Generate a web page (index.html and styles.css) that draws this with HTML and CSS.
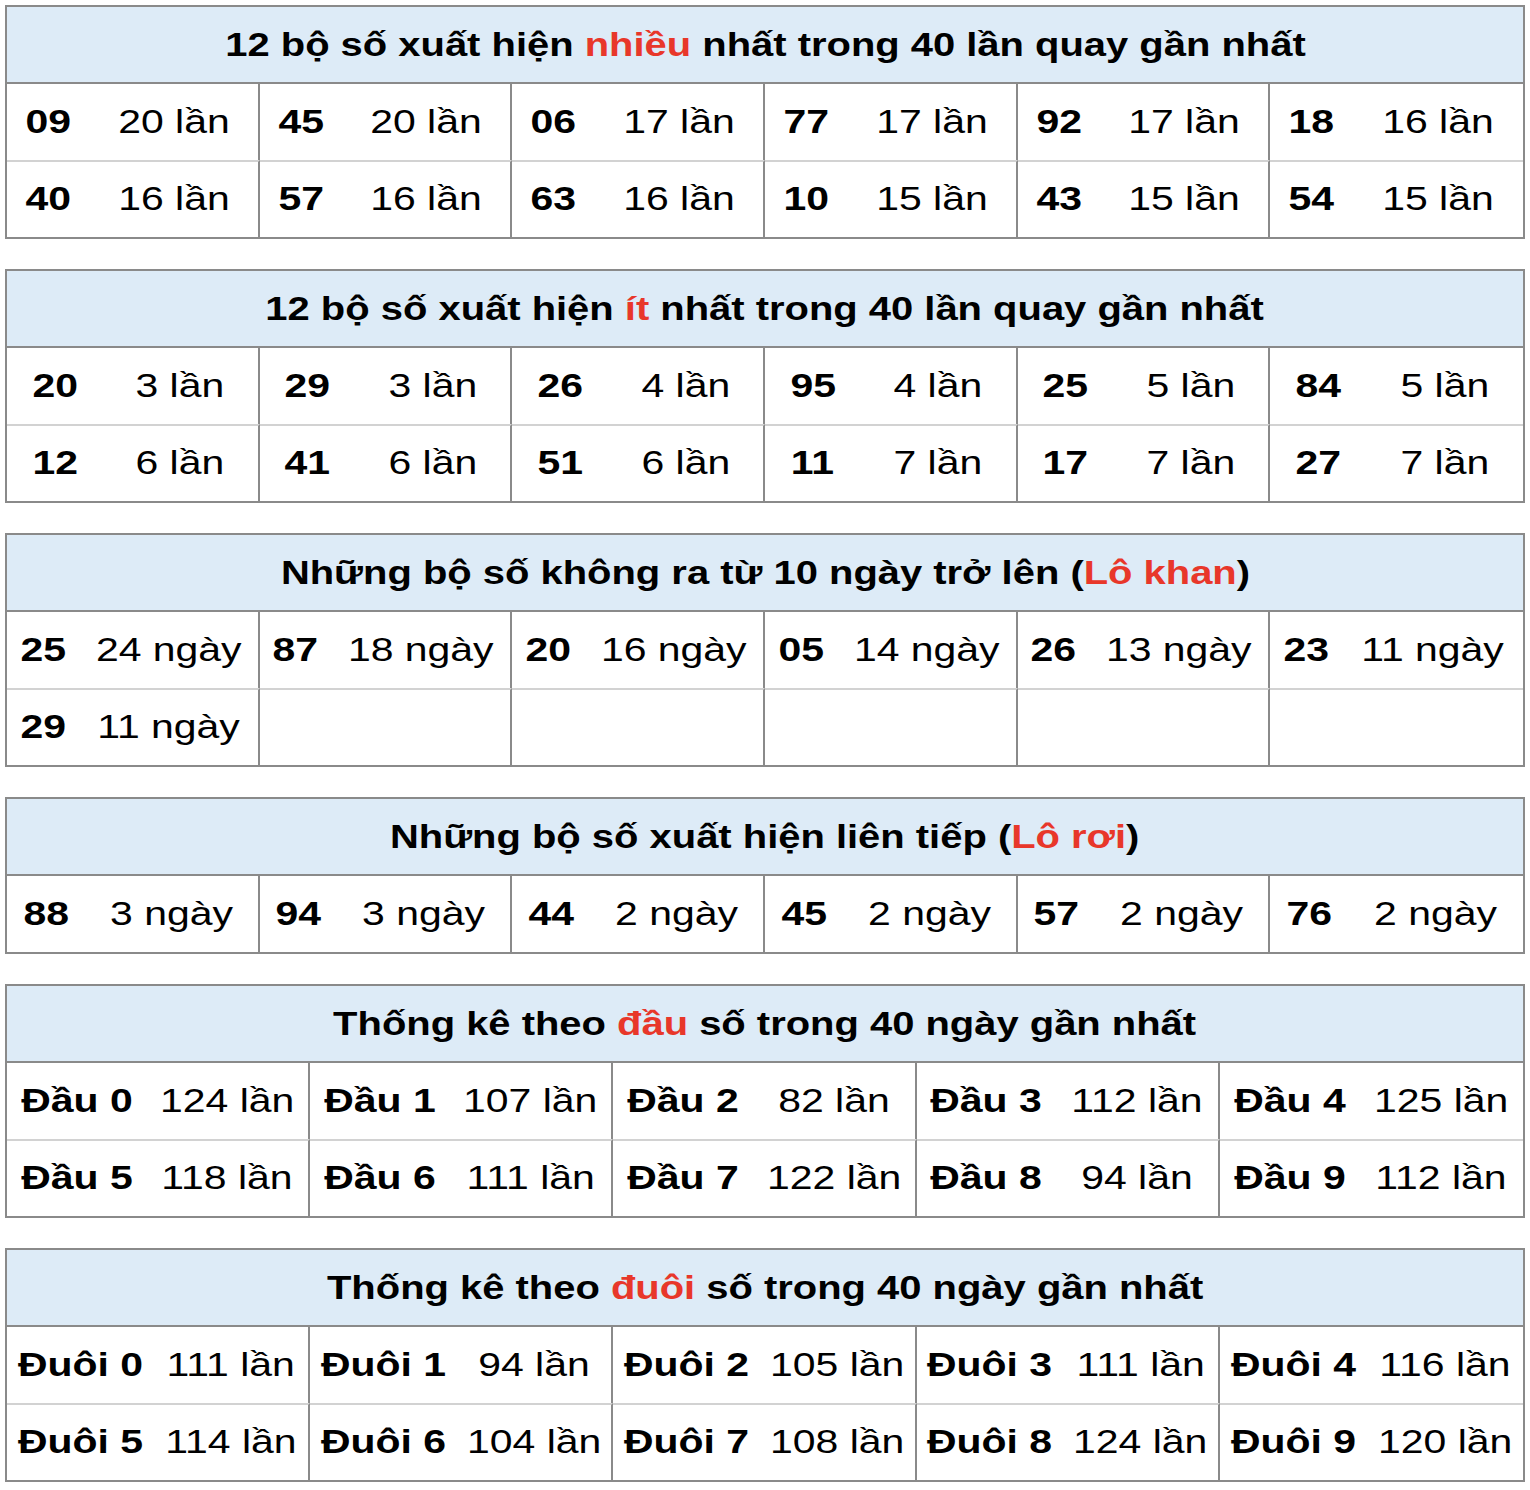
FILE: index.html
```html
<!DOCTYPE html>
<html lang="vi">
<head>
<meta charset="utf-8">
<title>Thống kê lô tô</title>
<link rel="stylesheet" href="styles.css">
</head>
<body>
<main class="page">

<section class="stat t1">
  <h2 class="stat-title"><span class="wide">12 bộ số xuất hiện <em class="hl">nhiều</em> nhất trong 40 lần quay gần nhất</span></h2>
  <div class="stat-grid">
    <div class="c num"><span class="wide">09</span></div><div class="c cnt"><span class="wide">20 lần</span></div>
    <div class="c num"><span class="wide">45</span></div><div class="c cnt"><span class="wide">20 lần</span></div>
    <div class="c num"><span class="wide">06</span></div><div class="c cnt"><span class="wide">17 lần</span></div>
    <div class="c num"><span class="wide">77</span></div><div class="c cnt"><span class="wide">17 lần</span></div>
    <div class="c num"><span class="wide">92</span></div><div class="c cnt"><span class="wide">17 lần</span></div>
    <div class="c num"><span class="wide">18</span></div><div class="c cnt"><span class="wide">16 lần</span></div>
    <div class="c num"><span class="wide">40</span></div><div class="c cnt"><span class="wide">16 lần</span></div>
    <div class="c num"><span class="wide">57</span></div><div class="c cnt"><span class="wide">16 lần</span></div>
    <div class="c num"><span class="wide">63</span></div><div class="c cnt"><span class="wide">16 lần</span></div>
    <div class="c num"><span class="wide">10</span></div><div class="c cnt"><span class="wide">15 lần</span></div>
    <div class="c num"><span class="wide">43</span></div><div class="c cnt"><span class="wide">15 lần</span></div>
    <div class="c num"><span class="wide">54</span></div><div class="c cnt"><span class="wide">15 lần</span></div>
  </div>
</section>

<section class="stat t2">
  <h2 class="stat-title"><span class="wide">12 bộ số xuất hiện <em class="hl">ít</em> nhất trong 40 lần quay gần nhất</span></h2>
  <div class="stat-grid">
    <div class="c num"><span class="wide">20</span></div><div class="c cnt"><span class="wide">3 lần</span></div>
    <div class="c num"><span class="wide">29</span></div><div class="c cnt"><span class="wide">3 lần</span></div>
    <div class="c num"><span class="wide">26</span></div><div class="c cnt"><span class="wide">4 lần</span></div>
    <div class="c num"><span class="wide">95</span></div><div class="c cnt"><span class="wide">4 lần</span></div>
    <div class="c num"><span class="wide">25</span></div><div class="c cnt"><span class="wide">5 lần</span></div>
    <div class="c num"><span class="wide">84</span></div><div class="c cnt"><span class="wide">5 lần</span></div>
    <div class="c num"><span class="wide">12</span></div><div class="c cnt"><span class="wide">6 lần</span></div>
    <div class="c num"><span class="wide">41</span></div><div class="c cnt"><span class="wide">6 lần</span></div>
    <div class="c num"><span class="wide">51</span></div><div class="c cnt"><span class="wide">6 lần</span></div>
    <div class="c num"><span class="wide">11</span></div><div class="c cnt"><span class="wide">7 lần</span></div>
    <div class="c num"><span class="wide">17</span></div><div class="c cnt"><span class="wide">7 lần</span></div>
    <div class="c num"><span class="wide">27</span></div><div class="c cnt"><span class="wide">7 lần</span></div>
  </div>
</section>

<section class="stat t3">
  <h2 class="stat-title"><span class="wide">Những bộ số không ra từ 10 ngày trở lên (<em class="hl">Lô khan</em>)</span></h2>
  <div class="stat-grid">
    <div class="c num"><span class="wide">25</span></div><div class="c cnt"><span class="wide">24 ngày</span></div>
    <div class="c num"><span class="wide">87</span></div><div class="c cnt"><span class="wide">18 ngày</span></div>
    <div class="c num"><span class="wide">20</span></div><div class="c cnt"><span class="wide">16 ngày</span></div>
    <div class="c num"><span class="wide">05</span></div><div class="c cnt"><span class="wide">14 ngày</span></div>
    <div class="c num"><span class="wide">26</span></div><div class="c cnt"><span class="wide">13 ngày</span></div>
    <div class="c num"><span class="wide">23</span></div><div class="c cnt"><span class="wide">11 ngày</span></div>
    <div class="c num"><span class="wide">29</span></div><div class="c cnt"><span class="wide">11 ngày</span></div>
    <div class="c num"></div><div class="c cnt"></div>
    <div class="c num"></div><div class="c cnt"></div>
    <div class="c num"></div><div class="c cnt"></div>
    <div class="c num"></div><div class="c cnt"></div>
    <div class="c num"></div><div class="c cnt"></div>
  </div>
</section>

<section class="stat t4">
  <h2 class="stat-title"><span class="wide">Những bộ số xuất hiện liên tiếp (<em class="hl">Lô rơi</em>)</span></h2>
  <div class="stat-grid">
    <div class="c num"><span class="wide">88</span></div><div class="c cnt"><span class="wide">3 ngày</span></div>
    <div class="c num"><span class="wide">94</span></div><div class="c cnt"><span class="wide">3 ngày</span></div>
    <div class="c num"><span class="wide">44</span></div><div class="c cnt"><span class="wide">2 ngày</span></div>
    <div class="c num"><span class="wide">45</span></div><div class="c cnt"><span class="wide">2 ngày</span></div>
    <div class="c num"><span class="wide">57</span></div><div class="c cnt"><span class="wide">2 ngày</span></div>
    <div class="c num"><span class="wide">76</span></div><div class="c cnt"><span class="wide">2 ngày</span></div>
  </div>
</section>

<section class="stat t5 five">
  <h2 class="stat-title"><span class="wide">Thống kê theo <em class="hl">đầu</em> số trong 40 ngày gần nhất</span></h2>
  <div class="stat-grid">
    <div class="c num"><span class="wide">Đầu 0</span></div><div class="c cnt"><span class="wide">124 lần</span></div>
    <div class="c num"><span class="wide">Đầu 1</span></div><div class="c cnt"><span class="wide">107 lần</span></div>
    <div class="c num"><span class="wide">Đầu 2</span></div><div class="c cnt"><span class="wide">82 lần</span></div>
    <div class="c num"><span class="wide">Đầu 3</span></div><div class="c cnt"><span class="wide">112 lần</span></div>
    <div class="c num"><span class="wide">Đầu 4</span></div><div class="c cnt"><span class="wide">125 lần</span></div>
    <div class="c num"><span class="wide">Đầu 5</span></div><div class="c cnt"><span class="wide">118 lần</span></div>
    <div class="c num"><span class="wide">Đầu 6</span></div><div class="c cnt"><span class="wide">111 lần</span></div>
    <div class="c num"><span class="wide">Đầu 7</span></div><div class="c cnt"><span class="wide">122 lần</span></div>
    <div class="c num"><span class="wide">Đầu 8</span></div><div class="c cnt"><span class="wide">94 lần</span></div>
    <div class="c num"><span class="wide">Đầu 9</span></div><div class="c cnt"><span class="wide">112 lần</span></div>
  </div>
</section>

<section class="stat t6 five">
  <h2 class="stat-title"><span class="wide">Thống kê theo <em class="hl">đuôi</em> số trong 40 ngày gần nhất</span></h2>
  <div class="stat-grid">
    <div class="c num"><span class="wide">Đuôi 0</span></div><div class="c cnt"><span class="wide">111 lần</span></div>
    <div class="c num"><span class="wide">Đuôi 1</span></div><div class="c cnt"><span class="wide">94 lần</span></div>
    <div class="c num"><span class="wide">Đuôi 2</span></div><div class="c cnt"><span class="wide">105 lần</span></div>
    <div class="c num"><span class="wide">Đuôi 3</span></div><div class="c cnt"><span class="wide">111 lần</span></div>
    <div class="c num"><span class="wide">Đuôi 4</span></div><div class="c cnt"><span class="wide">116 lần</span></div>
    <div class="c num"><span class="wide">Đuôi 5</span></div><div class="c cnt"><span class="wide">114 lần</span></div>
    <div class="c num"><span class="wide">Đuôi 6</span></div><div class="c cnt"><span class="wide">104 lần</span></div>
    <div class="c num"><span class="wide">Đuôi 7</span></div><div class="c cnt"><span class="wide">108 lần</span></div>
    <div class="c num"><span class="wide">Đuôi 8</span></div><div class="c cnt"><span class="wide">124 lần</span></div>
    <div class="c num"><span class="wide">Đuôi 9</span></div><div class="c cnt"><span class="wide">120 lần</span></div>
  </div>
</section>

</main>
</body>
</html>
```

FILE: styles.css
```css
* {
  box-sizing: border-box;
}

html, body {
  margin: 0;
  padding: 0;
  background: #ffffff;
}

body {
  font-family: "Liberation Sans", Arial, Helvetica, sans-serif;
  color: #000000;
}

.page {
  padding: 5px 5px 0 5px;
  display: flex;
  flex-direction: column;
  gap: 30px;
  width: 1530px;
}

.stat {
  width: 1520px;
  border: 2px solid #8a8a8a;
}

.stat-title {
  margin: 0;
  height: 77px;
  background: #ddebf7;
  border-bottom: 2px solid #8a8a8a;
  display: flex;
  align-items: center;
  justify-content: center;
  font-size: 33px;
  font-weight: 700;
  white-space: nowrap;
}

.stat-title .wide {
  transform: scaleX(1.21);
}

.hl {
  font-style: normal;
  color: #e8372a;
}

.wide {
  display: inline-block;
  transform: scaleX(1.24);
  white-space: nowrap;
}

.stat-grid {
  display: grid;
  grid-auto-rows: 76px 77px;
}

.t1 .stat-grid { grid-template-columns: repeat(6, 83fr 170fr); }
.t2 .stat-grid { grid-template-columns: repeat(6, 96fr 157fr); }
.t3 .stat-grid { grid-template-columns: repeat(6, 72fr 181fr); }
.t4 .stat-grid { grid-template-columns: repeat(6, 78fr 175fr); }
.t5 .stat-grid { grid-template-columns: repeat(5, 140fr 164fr); }
.t6 .stat-grid { grid-template-columns: repeat(5, 147fr 157fr); }

.c {
  display: flex;
  align-items: center;
  justify-content: center;
  padding-bottom: 2px;
  font-size: 33px;
  line-height: 1;
  white-space: nowrap;
}

.num {
  font-weight: 700;
}

.cnt {
  border-right: 2px solid #8a8a8a;
}

.stat:not(.five) .c:nth-child(12n) {
  border-right: none;
}

.five .c:nth-child(10n) {
  border-right: none;
}

/* second row: light separator line on top */
.stat:not(.five) .c:nth-child(n+13) {
  border-top: 2px solid #d2d2d2;
}

.five .c:nth-child(n+11) {
  border-top: 2px solid #d2d2d2;
}
```
